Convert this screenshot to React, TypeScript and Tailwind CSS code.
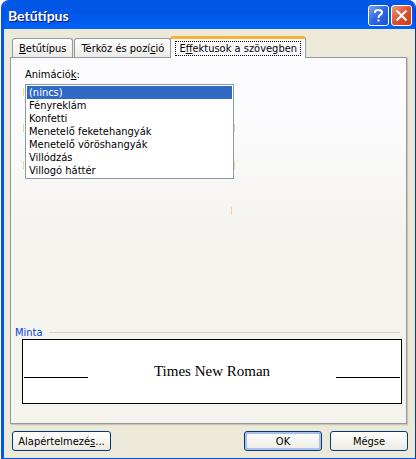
import { useState } from "react";
import type { ReactNode } from "react";

const animations = [
  "(nincs)",
  "Fényreklám",
  "Konfetti",
  "Menetelő feketehangyák",
  "Menetelő vöröshangyák",
  "Villódzás",
  "Villogó háttér",
];

export default function App() {
  const [animation, setAnimation] = useState(animations[0]);

  return (
    <div className="min-h-screen bg-white pl-px font-['DejaVu_Sans_Condensed','Noto_Sans',sans-serif] text-[11px] leading-[13px] text-black">
      <div className="flex min-h-screen flex-col overflow-hidden rounded-t-lg border-r border-b border-l-3 border-r-[#0831d9] border-b-[#0050ee] border-l-[#0054f0] bg-[#ece9d8]">
        <TitleBar />

        <div className="flex flex-1 flex-col px-1.5 pt-[7px] pb-[7px]">
          <div role="tablist" className="flex items-end gap-px px-0.5">
            <Tab>
              <u>B</u>etűtípus
            </Tab>
            <Tab>
              Térköz és pozí<u>c</u>ió
            </Tab>
            <ActiveTab>
              E<u>f</u>fektusok a szövegben
            </ActiveTab>
          </div>

          <div
            role="tabpanel"
            className="mr-0.5 flex flex-1 flex-col border border-[#919b9c] bg-linear-to-b from-[#fcfcfe] from-15% to-[#f4f3ee] to-50% px-1 pt-2.5 pb-[19px] shadow-[1px_1px_1px_#c9c5b2]"
          >
            <div className="px-2.5">
              <label htmlFor="animations" className="block pb-[3px]">
                Animáció<u>k</u>:
              </label>
              <div className="relative w-[209px]">
                <select
                  id="animations"
                  size={7}
                  value={animation}
                  onChange={(e) => setAnimation(e.target.value)}
                  className="block h-[95px] w-full appearance-none overflow-hidden border border-[#7f9db9] bg-white p-px outline-none"
                >
                  {animations.map((name) => (
                    <option
                      key={name}
                      value={name}
                      className="h-[13px] min-h-0 px-0.5 py-0 leading-[13px] checked:bg-[#316ac5] checked:bg-linear-to-r checked:from-[#316ac5] checked:to-[#316ac5] checked:text-white"
                    >
                      {name}
                    </option>
                  ))}
                </select>
                <Mark className="top-1 -left-0.5" />
                <Mark className="top-10 -left-0.5" />
                <Mark className="top-[77px] -left-0.5" />
                <Mark className="top-10 -right-px" />
                <Mark className="top-[77px] -right-px" />
                <Mark className="top-[123px] right-0.5" />
              </div>
            </div>

            <section className="mt-auto">
              <div className="flex items-center gap-1.5 pr-0.5">
                <h2 className="text-[#0046d5]">Minta</h2>
                <div className="h-px flex-1 bg-[#d0d0bf]" />
              </div>
              <div className="ml-[7px] flex h-[65px] items-center justify-between border border-black bg-white px-px">
                <div className="mt-3 h-px w-16 bg-black" />
                <p className="font-['Liberation_Serif',serif] text-[15px]">Times New Roman</p>
                <div className="mt-3 h-px w-16 bg-black" />
              </div>
            </section>
          </div>

          <div className="mt-[7px] mr-px ml-0.5 flex gap-2">
            <button className="mr-auto h-5 w-[99px] rounded-[3px] border border-[#003c74] bg-linear-to-b from-white to-[#eceae2]">
              Alapértelmezé<u>s</u>...
            </button>
            <button className="h-5 w-[78px] rounded-[3px] border border-[#003c74] bg-linear-to-b from-white to-[#eceae2] shadow-[inset_0_0_0_2px_#a9c0ee]">
              OK
            </button>
            <button className="h-5 w-[78px] rounded-[3px] border border-[#003c74] bg-linear-to-b from-white to-[#eceae2]">
              Mégse
            </button>
          </div>
        </div>
      </div>
    </div>
  );
}

const TitleBar = () => (
  <header className="flex h-[29px] items-center gap-0.5 bg-linear-to-b from-[#0058e6] from-0% via-[#0055e5] via-40% to-[#0062f8] pt-0.5 pr-[3px] pl-1">
    <h1 className="flex-1 font-['Lato',sans-serif] text-sm font-bold text-white [text-shadow:1px_1px_#0a1883]">
      Betűtípus
    </h1>
    <button
      aria-label="Súgó"
      className="flex size-[21px] items-center justify-center rounded-[3px] border border-white bg-linear-to-br from-[#7aa0f4] via-[#2f66e8] to-[#1c4fd0]"
    >
      <svg viewBox="0 0 19 19" className="size-[19px]" fill="none" stroke="white" strokeWidth="2">
        <path d="M6 7V5.5Q6.500 4 9.500 4Q13 4 13 6.500Q13 8 11 9Q9.500 10 9.500 12" />
        <path d="M9.500 13.500V15.500" />
      </svg>
    </button>
    <button
      aria-label="Bezárás"
      className="flex size-[21px] items-center justify-center rounded-[3px] border border-white bg-linear-to-br from-[#f0987c] via-[#e0502a] to-[#c83c14]"
    >
      <svg viewBox="0 0 19 19" className="size-[19px]" stroke="white" strokeWidth="2.200">
        <path d="M4.500 4.500L14.500 14.500M14.500 4.500L4.500 14.500" />
      </svg>
    </button>
  </header>
);

const Tab = ({ children }: { children: ReactNode }) => (
  <button
    role="tab"
    aria-selected={false}
    className="h-[19px] rounded-t-[3px] border border-b-0 border-[#919b9c] bg-linear-to-b from-white to-[#ecebe6] px-1.5 whitespace-nowrap"
  >
    {children}
  </button>
);

const ActiveTab = ({ children }: { children: ReactNode }) => (
  <button
    role="tab"
    aria-selected
    className="z-10 -mb-px -ml-0.5 h-[22px] rounded-t-[3px] border border-t-3 border-b-0 border-[#919b9c] border-t-[#f9b035] bg-[#fcfcfe] px-1 whitespace-nowrap"
  >
    <span className="block border border-dotted border-black px-[3px]">{children}</span>
  </button>
);

/* Thin amber tick beside the list */
const Mark = ({ className }: { className: string }) => (
  <span className={`absolute h-2 w-px bg-[#fbd58c] ${className}`} />
);
